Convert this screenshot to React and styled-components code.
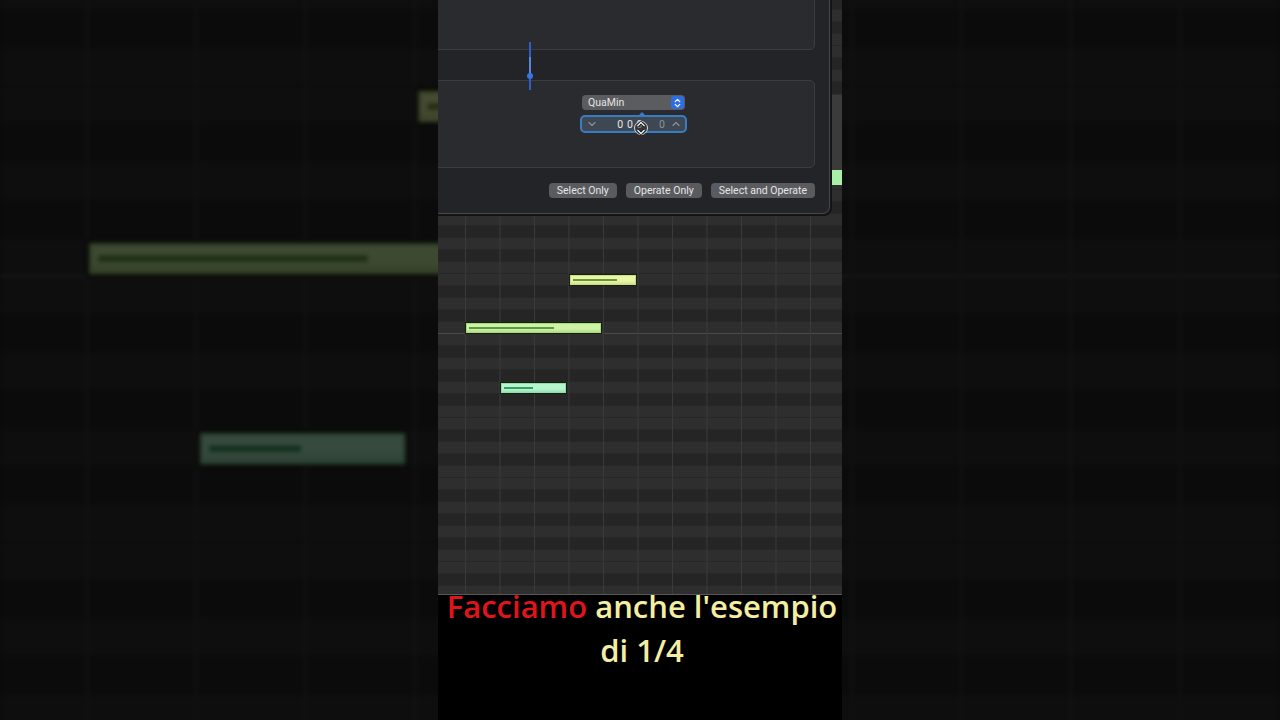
import React from "react";
import styled, { createGlobalStyle } from "styled-components";

const GlobalStyle = createGlobalStyle`
  html, body {
    margin: 0;
    padding: 0;
    background: #000;
  }
  body {
    width: 1280px;
    height: 720px;
    overflow: hidden;
    font-family: "Roboto", "Liberation Sans", sans-serif;
  }
`;

const Stage = styled.div`
  position: relative;
  width: 1280px;
  height: 720px;
  overflow: hidden;
  background: #0a0a0a;
  display: flex;
  justify-content: center;
`;

// blurred, darkened copy of the video frame filling the sides
const Backdrop = styled.div`
  position: absolute;
  inset: 0;
  display: flex;
  justify-content: center;
  align-items: center;
  filter: brightness(0.3) blur(2px);
  pointer-events: none;
`;

const Zoomed = styled.div`
  flex-shrink: 0;
  transform: scale(3.168);
  transform-origin: center center;
`;

const FrameBox = styled.div`
  position: relative;
  width: 404px;
  height: 720px;
  flex-shrink: 0;
  display: flex;
  flex-direction: column;
  overflow: hidden;
  background: #000;
`;

const Editor = styled.div`
  position: relative;
  height: 595px;
  flex: none;
  overflow: hidden;
  background: #2a2a2a;
  border-bottom: 1px solid #575757;
  box-sizing: border-box;
`;

const Rows = styled.div`
  margin-top: -2px;
  display: flex;
  flex-direction: column;
`;

const Row = styled.div`
  height: 12px;
  box-sizing: border-box;
  background: ${(p) => (p.$black ? "#252525" : "#2e2e2e")};
  border-bottom: 1px solid ${(p) => (p.$octave ? "#4a4a4a" : "#272727")};
`;

const GridLines = styled.div`
  position: absolute;
  inset: 0;
  background-image: linear-gradient(to right, #3a3a3a 1px, transparent 1px);
  background-size: 34.5px 100%;
  background-position: 27px 0;
  pointer-events: none;
`;

const Lane = styled.div`
  position: absolute;
  left: 392px;
  top: 95px;
  width: 20px;
  height: 75px;
  background: #3b3b3b;
`;

const LaneNote = styled.div`
  position: absolute;
  left: 393px;
  top: 170px;
  width: 30px;
  height: 15px;
  background: #a8efa8;
`;

const Note = styled.div`
  position: absolute;
  left: ${(p) => p.$x}px;
  top: ${(p) => p.$y}px;
  width: ${(p) => p.$w}px;
  height: 12px;
  box-sizing: border-box;
  background: linear-gradient(to bottom, ${(p) => p.$color}, ${(p) => p.$color} 60%, ${(p) => p.$shade});
  border: 1px solid #17200f;
  box-shadow: inset 0 0 0 1px ${(p) => p.$shade};
`;

const Velocity = styled.div`
  position: absolute;
  left: 3px;
  top: 4px;
  height: 1.5px;
  width: ${(p) => p.$len}px;
  background: ${(p) => p.$color};
`;

const Panel = styled.div`
  position: absolute;
  left: 0;
  top: 0;
  width: 392px;
  height: 214px;
  box-sizing: border-box;
  background: #232428;
  border-right: 1px solid #46474b;
  border-bottom: 1px solid #46474b;
  border-bottom-right-radius: 7px;
  box-shadow: 1px 1px 0 1px #141414;
  display: flex;
  flex-direction: column;
  padding: 0 14px 15px 0;
`;

const Section = styled.div`
  position: relative;
  margin-left: -10px;
  box-sizing: border-box;
  background: #2a2b2f;
  border: 1px solid #3c3d41;
  border-radius: 5px;
`;

const TopSection = styled(Section)`
  margin-top: -10px;
  height: 61px;
`;

const MidSection = styled(Section)`
  margin-top: 30px;
  height: 89px;
  display: flex;
  flex-direction: column;
  align-items: flex-start;
  padding: 14px 0 0 151px;
  gap: 5px;
`;

const Slider = styled.div`
  position: absolute;
  left: 91px;
  top: 42px;
  width: 2px;
  height: 48px;
  background: #2c5fc9;
`;

const SliderFill = styled.div`
  position: absolute;
  left: 0;
  top: 15px;
  width: 2px;
  height: 18px;
  background: #5a86e0;
`;

const SliderThumb = styled.div`
  position: absolute;
  left: -2px;
  top: 31px;
  width: 6px;
  height: 6px;
  border-radius: 50%;
  background: #3c72e2;
`;

const Popup = styled.div`
  width: 103px;
  height: 15px;
  box-sizing: border-box;
  margin-left: 2px;
  background: #5b5c60;
  border-radius: 4px;
  display: flex;
  align-items: center;
  justify-content: space-between;
  padding: 0 1px 0 6px;
  color: #e4e4e4;
  font-size: 10.5px;
`;

const PopupArrows = styled.div`
  width: 13px;
  height: 13px;
  border-radius: 3px;
  background: #2f6ee0;
  display: flex;
  align-items: center;
  justify-content: center;
`;

const Stepper = styled.div`
  position: relative;
  width: 107px;
  height: 18px;
  box-sizing: border-box;
  border: 2px solid #3a7cc4;
  border-radius: 5px;
  background: #3e4853;
  display: flex;
  align-items: center;
  padding: 0 5px 0 6px;
  font-size: 10.5px;
`;

const Notch = styled.div`
  position: absolute;
  left: 57px;
  top: -5px;
  width: 0;
  height: 0;
  border-left: 3px solid transparent;
  border-right: 3px solid transparent;
  border-bottom: 3px solid #3a7cc4;
`;

const Digits = styled.span`
  flex: 1;
  text-align: right;
  color: #e8e8e8;
  letter-spacing: 0.6px;
  padding-right: 16px;
`;

const Unit = styled.span`
  color: #8d9299;
  margin-right: 7px;
`;

const Cursor = styled.svg`
  position: absolute;
  left: 51px;
  top: 2px;
`;

const ButtonRow = styled.div`
  margin-top: 15px;
  display: flex;
  justify-content: flex-end;
  gap: 9px;
`;

const Button = styled.div`
  height: 15px;
  box-sizing: border-box;
  padding: 0 8px;
  border-radius: 4px;
  background: #5a5b5f;
  color: #e6e6e6;
  font-size: 10.5px;
  display: flex;
  align-items: center;
  white-space: nowrap;
`;

const Subtitle = styled.div`
  flex: 1;
  background: #000;
  text-align: center;
  padding-left: 4px;
  font-family: "Open Sans", "Noto Sans", sans-serif;
  font-weight: 600;
  font-size: 31px;
  line-height: 44px;
  color: #f4eea2;
  white-space: nowrap;
`;

const SubText = styled.div`
  margin-top: -11px;
`;

const Red = styled.span`
  color: #e0151b;
`;

const BLACK = [1, 3, 6, 8, 10];
const rows = Array.from({ length: 50 }, (_, i) => {
  const s = 27 - i;
  const n = ((s % 12) + 12) % 12;
  return { black: BLACK.includes(n), octave: s === 0 };
});

const notes = [
  { x: 131, y: 274, w: 68, color: "#e6f7a8", shade: "#c9dd86", vel: 44, velColor: "#6f9436" },
  { x: 27, y: 322, w: 137, color: "#cdf3a4", shade: "#a9d882", vel: 85, velColor: "#5f9a42" },
  { x: 62, y: 382, w: 67, color: "#b6f6ce", shade: "#8fdcac", vel: 29, velColor: "#389f62" },
];

const Chevron = ({ up, color = "#8d9299" }) => (
  <svg width="8" height="6" viewBox="0 0 8 6">
    <path
      d={up ? "M1 4.5 L4 1.5 L7 4.5" : "M1 1.5 L4 4.5 L7 1.5"}
      fill="none"
      stroke={color}
      strokeWidth="1.1"
      strokeLinecap="round"
      strokeLinejoin="round"
    />
  </svg>
);

function ControlPanel() {
  return (
    <Panel>
      <TopSection />
      <MidSection>
        <Popup>
          <span>QuaMin</span>
          <PopupArrows>
            <svg width="7" height="10" viewBox="0 0 7 10">
              <path
                d="M1.2 3.6 L3.5 1.4 L5.8 3.6 M1.2 6.4 L3.5 8.6 L5.8 6.4"
                fill="none"
                stroke="#fff"
                strokeWidth="1.2"
                strokeLinecap="round"
                strokeLinejoin="round"
              />
            </svg>
          </PopupArrows>
        </Popup>
        <Stepper>
          <Notch />
          <Chevron />
          <Digits>0 0 0</Digits>
          <Unit>0</Unit>
          <Chevron up />
          <Cursor width="16" height="18" viewBox="0 0 16 18">
            <circle cx="8" cy="9" r="6.5" fill="rgba(40,40,40,0.55)" stroke="#d8d8d8" strokeWidth="1" />
            <path
              d="M4.5 7 L8 3.5 L11.5 7 M4.5 11 L8 14.5 L11.5 11"
              fill="none"
              stroke="#111"
              strokeWidth="2.6"
              strokeLinejoin="round"
            />
            <path
              d="M4.5 7 L8 3.5 L11.5 7 M4.5 11 L8 14.5 L11.5 11"
              fill="none"
              stroke="#fff"
              strokeWidth="1.2"
              strokeLinejoin="round"
            />
          </Cursor>
        </Stepper>
      </MidSection>
      <Slider>
        <SliderFill />
        <SliderThumb />
      </Slider>
      <ButtonRow>
        <Button>Select Only</Button>
        <Button>Operate Only</Button>
        <Button>Select and Operate</Button>
      </ButtonRow>
    </Panel>
  );
}

function Frame({ copy }) {
  return (
    <FrameBox aria-hidden={copy ? "true" : undefined}>
      <Editor>
        <Rows>
          {rows.map((r, i) => (
            <Row key={i} $black={r.black} $octave={r.octave} />
          ))}
        </Rows>
        <GridLines />
        <Lane />
        <LaneNote />
        {notes.map((n, i) => (
          <Note key={i} $x={n.x} $y={n.y} $w={n.w} $color={n.color} $shade={n.shade}>
            <Velocity $len={n.vel} $color={n.velColor} />
          </Note>
        ))}
        {!copy && <ControlPanel />}
      </Editor>
      <Subtitle>
        {!copy && (
          <SubText>
            <Red>Facciamo</Red> anche l'esempio
            <br />
            di 1/4
          </SubText>
        )}
      </Subtitle>
    </FrameBox>
  );
}

export default function App() {
  return (
    <>
      <GlobalStyle />
      <Stage>
        <Backdrop>
          <Zoomed>
            <Frame copy />
          </Zoomed>
        </Backdrop>
        <Frame />
      </Stage>
    </>
  );
}
